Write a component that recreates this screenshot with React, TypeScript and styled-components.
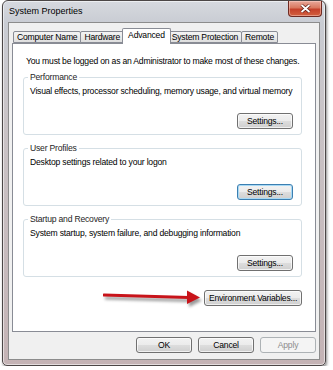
import styled, { createGlobalStyle } from "styled-components";

const GlobalStyle = createGlobalStyle`
  html, body {
    margin: 0;
    padding: 0;
    background: #ffffff;
  }
  body {
    font-family: "Liberation Sans", Arial, sans-serif;
    font-size: 8.6px;
    letter-spacing: -0.2px;
    color: #000;
  }
`;

const tabs = ["Computer Name", "Hardware", "Advanced", "System Protection", "Remote"];
const ACTIVE_TAB = "Advanced";

const groups = [
  {
    title: "Performance",
    text: "Visual effects, processor scheduling, memory usage, and virtual memory",
    focused: false,
  },
  {
    title: "User Profiles",
    text: "Desktop settings related to your logon",
    focused: true,
  },
  {
    title: "Startup and Recovery",
    text: "System startup, system failure, and debugging information",
    focused: false,
  },
];

const Arrow = () => (
  <ArrowSvg width="98" height="18" viewBox="0 0 98 18">
    <line x1="1" y1="6" x2="86" y2="8.5" stroke="#c8141a" strokeWidth="3" strokeLinecap="round" />
    <polygon points="84,1.5 97,8.5 84,15" fill="#c8141a" />
  </ArrowSvg>
);

export default function App() {
  return (
    <>
      <GlobalStyle />
      <Window>
        <TitleBar>
          <Title>System Properties</Title>
          <CloseButton>
            <svg width="11" height="9" viewBox="0 0 11 9">
              <path d="M1.5 1 L9.5 8 M9.5 1 L1.5 8" stroke="#5a1a12" strokeWidth="3.2" />
              <path d="M1.5 1 L9.5 8 M9.5 1 L1.5 8" stroke="#ffffff" strokeWidth="1.8" />
            </svg>
          </CloseButton>
        </TitleBar>
        <Content>
          <TabRow>
            {tabs.map((t) => (
              <Tab key={t} $active={t === ACTIVE_TAB}>
                {t}
              </Tab>
            ))}
          </TabRow>
          <Panel>
            <Notice>You must be logged on as an Administrator to make most of these changes.</Notice>
            {groups.map((g) => (
              <Group key={g.title}>
                <Legend>{g.title}</Legend>
                <GroupText>{g.text}</GroupText>
                <GroupActions>
                  <Button $focused={g.focused}>Settings...</Button>
                </GroupActions>
              </Group>
            ))}
            <EnvRow>
              <Arrow />
              <Button $wide>Environment Variables...</Button>
            </EnvRow>
          </Panel>
          <Footer>
            <Button>OK</Button>
            <Button>Cancel</Button>
            <Button disabled>Apply</Button>
          </Footer>
        </Content>
      </Window>
    </>
  );
}

const Window = styled.div`
  margin-left: 2px;
  width: 324px;
  height: 366px;
  border: 1px solid #4b4646;
  border-radius: 6px 6px 5px 5px;
  padding: 0 5px 5px 5px;
  box-sizing: border-box;
  display: flex;
  flex-direction: column;
  background: linear-gradient(
    to bottom,
    #d6d9df 0px,
    #c9ccd3 22px,
    #c9c3c6 120px,
    #c4b3b5 100%
  );
  box-shadow:
    inset 0 0 0 1px rgba(255, 255, 255, 0.55),
    1px 2px 3px rgba(0, 0, 0, 0.45);
`;

const TitleBar = styled.div`
  height: 21px;
  display: flex;
  align-items: flex-start;
  flex-shrink: 0;
`;

const Title = styled.div`
  font-size: 9px;
  letter-spacing: 0;
  line-height: 21px;
  padding-left: 1px;
  color: #000;
`;

const CloseButton = styled.div`
  margin-left: auto;
  margin-right: -2px;
  width: 34px;
  height: 16px;
  box-sizing: border-box;
  border: 1px solid #6e2a22;
  border-top: none;
  border-radius: 0 0 4px 4px;
  background: linear-gradient(to bottom, #e8a89a 0%, #d9785f 45%, #c5412a 55%, #d2603f 100%);
  box-shadow: inset 0 0 0 1px rgba(255, 220, 210, 0.45);
  display: flex;
  align-items: center;
  justify-content: center;
`;

const Content = styled.div`
  flex: 1;
  background: #f0f0f0;
  border: 1px solid #8c8c8c;
  padding: 5px 3px 0 3px;
  display: flex;
  flex-direction: column;
`;

const TabRow = styled.div`
  display: flex;
  align-items: flex-end;
  height: 15px;
  padding-left: 1px;
  position: relative;
  z-index: 1;
`;

const Tab = styled.div<{ $active: boolean }>`
  box-sizing: border-box;
  height: ${({ $active }) => ($active ? "16px" : "12px")};
  margin: ${({ $active }) => ($active ? "0 -2px -1px -2px" : "0 0 0 -1px")};
  padding: ${({ $active }) => ($active ? "0 5px 1px 5px" : "0 3px")};
  border: 1px solid #898c95;
  border-bottom: ${({ $active }) => ($active ? "none" : "1px solid #898c95")};
  border-radius: 2px 2px 0 0;
  background: ${({ $active }) =>
    $active ? "#ffffff" : "linear-gradient(to bottom, #f3f3f3 0%, #ebebeb 50%, #dedede 100%)"};
  line-height: ${({ $active }) => ($active ? "13px" : "10px")};
  white-space: nowrap;
  position: relative;
  z-index: ${({ $active }) => ($active ? 2 : 1)};
  &:first-child {
    margin-left: 0;
  }
`;

const Panel = styled.div`
  height: 289px;
  box-sizing: border-box;
  background: #ffffff;
  border: 1px solid #898c95;
  padding: 11px 13px 0 10px;
  display: flex;
  flex-direction: column;
`;

const Notice = styled.div`
  line-height: 13px;
  padding-left: 3px;
  margin-bottom: 3px;
  white-space: nowrap;
`;

const Group = styled.fieldset`
  margin: 0 0 7px 0;
  padding: 0 8px 5px 6px;
  border: 1px solid #d5dfe5;
  border-radius: 3px;
  min-width: 0;
`;

const Legend = styled.legend`
  padding: 0 2px;
  margin-left: -2px;
  line-height: 12px;
  color: #1e1e1e;
`;

const GroupText = styled.div`
  margin-top: 2px;
  line-height: 13px;
  white-space: nowrap;
`;

const GroupActions = styled.div`
  display: flex;
  justify-content: flex-end;
  margin-top: 15px;
`;

const EnvRow = styled.div`
  display: flex;
  justify-content: flex-end;
  align-items: center;
  gap: 3px;
  margin-top: 5px;
`;

const ArrowSvg = styled.svg`
  display: block;
  filter: drop-shadow(2px 3px 1.5px rgba(0, 0, 0, 0.4));
`;

const Footer = styled.div`
  display: flex;
  justify-content: flex-end;
  gap: 6px;
  margin-top: 5px;
  padding-right: 0;
`;

const Button = styled.button<{ $focused?: boolean; $wide?: boolean }>`
  box-sizing: border-box;
  width: ${({ $wide }) => ($wide ? "98px" : "56px")};
  height: 16px;
  padding: 0;
  font-family: "Liberation Sans", Arial, sans-serif;
  font-size: 8.6px;
  letter-spacing: -0.2px;
  color: #000;
  border: 1px solid ${({ $focused }) => ($focused ? "#3c7fb1" : "#707070")};
  border-radius: 3px;
  background: linear-gradient(to bottom, #f2f2f2 0%, #ebebeb 50%, #dddddd 51%, #cfcfcf 100%);
  box-shadow: ${({ $focused }) =>
    $focused ? "inset 0 0 0 1px #a7d9f5" : "inset 0 0 0 1px rgba(255,255,255,0.7)"};
  &:disabled {
    color: #8d8d8d;
    border-color: #adb2b5;
    background: #f4f4f4;
    box-shadow: none;
  }
`;
